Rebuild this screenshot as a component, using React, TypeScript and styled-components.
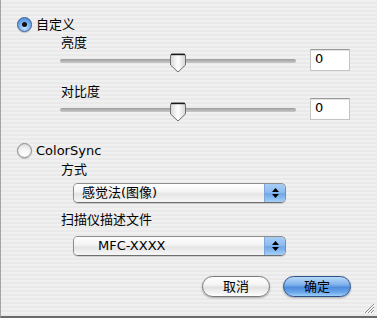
import React from 'react';
import styled, { createGlobalStyle } from 'styled-components';

const Global = createGlobalStyle`
  html, body { margin: 0; padding: 0; background: #ececec; }
  #root { width: 377px; height: 318px; }
`;

const Window = styled.div`
  position: relative;
  width: 377px;
  height: 318px;
  box-sizing: border-box;
  border-left: 1px solid #a3a3a3;
  border-bottom: 2px solid #6a6a6a;
  background: repeating-linear-gradient(
    to bottom,
    #f0f0f0 0px,
    #f0f0f0 2px,
    #e9e9e9 2px,
    #e9e9e9 4px
  );
  font-family: "DejaVu Sans", "Noto Sans CJK SC", sans-serif;
  font-size: 13px;
  color: #000;
  padding: 17px 0 0 16px;
  display: flex;
  flex-direction: column;
  overflow: hidden;
`;

const RadioRow = styled.label<{ $mt?: number }>`
  display: flex;
  align-items: center;
  gap: 4px;
  height: 15px;
  line-height: 15px;
  margin-top: ${p => p.$mt ?? 0}px;
`;

const RadioDot = styled.span<{ $on?: boolean }>`
  position: relative;
  width: 15px;
  height: 15px;
  box-sizing: border-box;
  border-radius: 50%;
  border: 1px solid ${p => (p.$on ? '#3b5d93' : '#8c8c8c')};
  background: ${p =>
    p.$on
      ? 'radial-gradient(circle at 50% 75%, #c6e2ff 0%, #7cb3ee 45%, #3d7fd6 100%)'
      : 'radial-gradient(circle at 50% 75%, #ffffff 0%, #f2f2f2 50%, #c9c9c9 100%)'};
  box-shadow: 0 1px 1px rgba(0, 0, 0, 0.2);
  &::after {
    content: '';
    display: ${p => (p.$on ? 'block' : 'none')};
    position: absolute;
    left: 50%;
    top: 50%;
    width: 5px;
    height: 5px;
    margin: -2.5px 0 0 -2.5px;
    border-radius: 50%;
    background: #111;
  }
`;

const Indent = styled.div`
  margin-left: 43px;
  display: flex;
  flex-direction: column;
`;

const Label = styled.div<{ $mt: number }>`
  height: 13px;
  line-height: 13px;
  margin-top: ${p => p.$mt}px;
  padding-left: 1px;
`;

const SliderRow = styled.div`
  display: flex;
  align-items: flex-start;
  gap: 14px;
  height: 24px;
`;

const Slider = styled.div`
  position: relative;
  width: 236px;
  height: 24px;
`;

const Track = styled.div`
  position: absolute;
  left: 0;
  right: 0;
  top: 10px;
  height: 4px;
  border-radius: 2px;
  background: linear-gradient(to bottom, #9c9c9c 0%, #b4b4b4 50%, #c8c8c8 100%);
`;

const Thumb = styled.svg`
  position: absolute;
  top: 4px;
  width: 18px;
  height: 20px;
  margin-left: -9px;
`;

const Field = styled.div`
  width: 40px;
  height: 22px;
  box-sizing: border-box;
  background: #fff;
  border: 1px solid #c4c4c4;
  border-top-color: #9a9a9a;
  box-shadow: inset 0 1px 0 #e2e2e2;
  padding: 1px 0 0 4px;
  line-height: 15px;
`;

const Popup = styled.div<{ $mt: number; $indent: number }>`
  display: flex;
  margin: ${p => p.$mt}px 0 0 13px;
  width: 213px;
  height: 20px;
  box-sizing: border-box;
  border: 1px solid #8c8c8c;
  border-bottom-color: #6e6e6e;
  border-radius: 5px;
  overflow: hidden;
  box-shadow: 0 1px 1px rgba(0, 0, 0, 0.15);
`;

const PopupText = styled.div<{ $indent: number }>`
  flex: 1;
  padding-left: ${p => p.$indent}px;
  line-height: 18px;
  background: linear-gradient(to bottom, #ffffff 0%, #f3f3f3 45%, #e4e4e4 55%, #f7f7f7 100%);
  white-space: nowrap;
`;

const PopupArrows = styled.div`
  width: 20px;
  display: flex;
  flex-direction: column;
  align-items: center;
  justify-content: center;
  gap: 2px;
  border-left: 1px solid #7ea6d8;
  background: linear-gradient(to bottom, #a7cdf6 0%, #8ebcf0 45%, #6ea7e8 55%, #a4cff8 100%);
`;

const Arrow = styled.svg`
  width: 7px;
  height: 4px;
  display: block;
`;

const ButtonRow = styled.div`
  display: flex;
  justify-content: flex-end;
  gap: 13px;
  margin-top: 20px;
  padding-right: 26px;
`;

const Button = styled.button<{ $primary?: boolean }>`
  width: 68px;
  height: 21px;
  padding: 0;
  border-radius: 11px;
  font-family: inherit;
  font-size: 13px;
  line-height: 19px;
  color: #000;
  border: 1px solid ${p => (p.$primary ? '#2d4f87' : '#7a7a7a')};
  background: ${p =>
    p.$primary
      ? 'linear-gradient(to bottom, #b9d8f8 0%, #7fb2ec 40%, #4f8ddc 55%, #6aa6ec 80%, #9bd0fa 100%)'
      : 'linear-gradient(to bottom, #ffffff 0%, #f4f4f4 40%, #e2e2e2 55%, #f2f2f2 80%, #ffffff 100%)'};
  box-shadow: 0 1px 2px rgba(0, 0, 0, 0.3);
`;

const Grip = styled.svg`
  position: absolute;
  right: 2px;
  bottom: 2px;
  width: 11px;
  height: 11px;
`;

function SliderControl({ value }: { value: number }) {
  return (
    <SliderRow>
      <Slider>
        <Track />
        <Thumb style={{ left: `${value}%` }} viewBox="0 0 18 20">
          <defs>
            <linearGradient id={`tg${value}`} x1="0" y1="0" x2="1" y2="0">
              <stop offset="0" stopColor="#d8d8d8" />
              <stop offset="0.5" stopColor="#ffffff" />
              <stop offset="1" stopColor="#d4d4d4" />
            </linearGradient>
          </defs>
          <path
            d="M1.5 3 Q1.5 1 3.5 1 H14.5 Q16.5 1 16.5 3 V12 L9 19 L1.5 12 Z"
            fill="url(#tg50)"
            stroke="#6e6e6e"
            strokeWidth="1"
          />
          <path d="M2 1.5 H16" stroke="#1a1a1a" strokeWidth="1.4" />
        </Thumb>
      </Slider>
      <Field>0</Field>
    </SliderRow>
  );
}

function PopupButton({ text, mt, indent }: { text: string; mt: number; indent: number }) {
  return (
    <Popup $mt={mt} $indent={indent}>
      <PopupText $indent={indent}>{text}</PopupText>
      <PopupArrows>
        <Arrow viewBox="0 0 7 4">
          <path d="M3.5 0 L7 4 H0 Z" fill="#000" />
        </Arrow>
        <Arrow viewBox="0 0 7 4">
          <path d="M0 0 H7 L3.5 4 Z" fill="#000" />
        </Arrow>
      </PopupArrows>
    </Popup>
  );
}

export default function App() {
  return (
    <>
      <Global />
      <Window>
        <RadioRow>
          <RadioDot $on />
          <span>自定义</span>
        </RadioRow>
        <Indent>
          <Label $mt={4}>亮度</Label>
          <SliderControl value={50} />
          <Label $mt={12}>对比度</Label>
          <SliderControl value={50} />
        </Indent>
        <RadioRow $mt={21}>
          <RadioDot />
          <span>ColorSync</span>
        </RadioRow>
        <Indent>
          <Label $mt={5}>方式</Label>
          <PopupButton text="感觉法(图像)" mt={7} indent={8} />
          <Label $mt={10}>扫描仪描述文件</Label>
          <PopupButton text="MFC-XXXX" mt={10} indent={24} />
        </Indent>
        <ButtonRow>
          <Button>取消</Button>
          <Button $primary>确定</Button>
        </ButtonRow>
        <Grip viewBox="0 0 11 11">
          <path d="M10 1 L1 10 M10 4 L4 10 M10 7 L7 10" stroke="#8a8a8a" strokeWidth="1" />
          <path d="M10 2 L2 10 M10 5 L5 10 M10 8 L8 10" stroke="#ffffff" strokeWidth="1" />
        </Grip>
      </Window>
    </>
  );
}
